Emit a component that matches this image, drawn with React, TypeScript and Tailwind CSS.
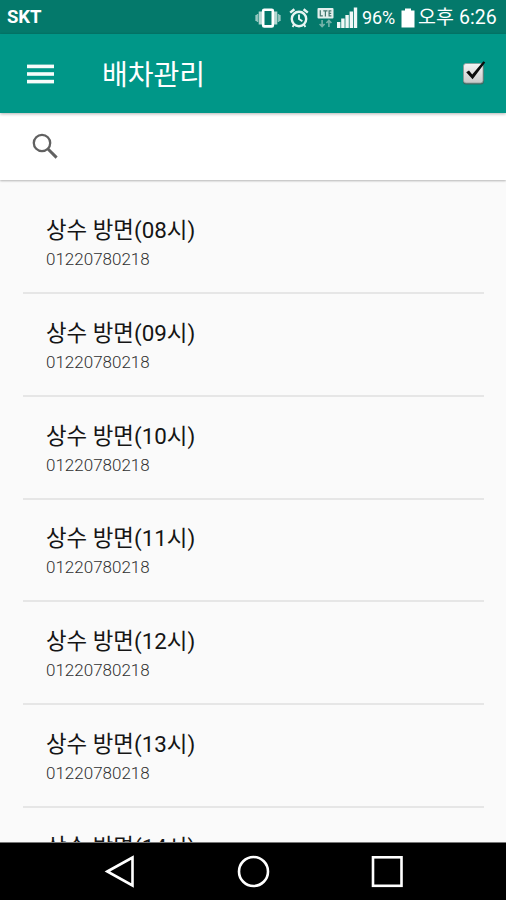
import React from "react";

const routes = [
  { hour: "08", code: "01220780218" },
  { hour: "09", code: "01220780218" },
  { hour: "10", code: "01220780218" },
  { hour: "11", code: "01220780218" },
  { hour: "12", code: "01220780218" },
  { hour: "13", code: "01220780218" },
  { hour: "14", code: "01220780218" },
];

function VibrateIcon() {
  return (
    <svg width="28" height="22" viewBox="0 0 28 22" fill="none" className="shrink-0">
      <path d="M6.4 4.5v13M21.6 4.5v13" stroke="#b4d6d1" strokeWidth="3.4" />
      <path d="M2.4 8v6M25.6 8v6" stroke="#9fcbc5" strokeWidth="2" />
      <path d="M3.5 7v8M24.5 7v8" stroke="#8ac0b8" strokeWidth="1.6" />
      <rect x="9.2" y="2.8" width="9.6" height="16.6" rx="1" stroke="#fff" strokeWidth="2.6" />
    </svg>
  );
}

function AlarmIcon() {
  return (
    <svg width="20" height="22" viewBox="0 0 20 22" fill="none" stroke="#e8f4f2" className="shrink-0">
      <circle cx="10" cy="12" r="7.2" strokeWidth="2.4" />
      <path d="M1.2 5.6 5.4 2.2M18.8 5.6 14.6 2.2" strokeWidth="2.5" />
      <path d="M10 7.4V12l3.4 2.2" strokeWidth="1.9" />
      <path d="M5 17.5 3.6 20M15 17.5l1.4 2.5" strokeWidth="1.8" />
    </svg>
  );
}

function LteIcon() {
  return (
    <svg width="17" height="22" viewBox="0 0 17 22" fill="none" className="shrink-0">
      <rect x="0.5" y="1" width="16" height="10.5" rx="1" fill="#e3efed" />
      <path
        d="M3.3 3.3v5.6h2.5M6.3 3.8h4.2M8.4 3.8v5.6M14.4 3.8h-2.3v5.1h2.3M12.1 6.3h2.1"
        stroke="#44766f"
        strokeWidth="1.2"
      />
      <path
        d="M5.1 13v6.5M2.6 17l2.5 2.6L7.6 17M11.9 20v-6.5M9.4 16l2.5-2.6 2.5 2.6"
        stroke="#76b3aa"
        strokeWidth="1.6"
      />
    </svg>
  );
}

function SignalIcon() {
  return (
    <svg width="21" height="22" viewBox="0 0 21 22" fill="#f1f8f7" className="shrink-0">
      <rect x="0" y="15" width="3.4" height="6" />
      <rect x="4.2" y="11.5" width="3.4" height="9.5" />
      <rect x="8.4" y="8" width="3.4" height="13" />
      <rect x="12.6" y="4.5" width="3.4" height="16.5" />
      <rect x="16.8" y="0.5" width="3.4" height="20.5" />
    </svg>
  );
}

function BatteryIcon() {
  return (
    <svg width="14" height="22" viewBox="0 0 14 22" fill="#fff" className="shrink-0">
      <path d="M4 1.5h6v2h3.5v17H.5v-17H4z" />
    </svg>
  );
}

function StatusBar() {
  return (
    <div className="flex h-[34px] shrink-0 items-center bg-[#04796b] pr-[9px] pl-[7px] text-white">
      <span className="mt-[2px] text-[18.5px] font-bold tracking-[-0.1px]">SKT</span>
      <div className="ml-auto flex items-center pt-px">
        <VibrateIcon />
        <div className="ml-[7px] flex">
          <AlarmIcon />
        </div>
        <div className="ml-[8px] flex">
          <LteIcon />
        </div>
        <div className="ml-[3px] flex">
          <SignalIcon />
        </div>
        <span className="ml-[4px] w-[35px] pt-px text-[18px] leading-[22px] tracking-[-0.1px] whitespace-nowrap">
          96%
        </span>
        <div className="ml-[4px] flex">
          <BatteryIcon />
        </div>
        <span className="ml-[3px] w-[36px] pt-px text-[19.5px] leading-[22px] whitespace-nowrap">오후</span>
        <span className="ml-[5px] w-[38px] pt-px text-[19.5px] leading-[22px] whitespace-nowrap">6:26</span>
      </div>
    </div>
  );
}

function CheckIcon() {
  return (
    <svg width="28" height="28" viewBox="0 0 28 28" fill="none">
      <defs>
        <linearGradient id="box" x1="0" y1="0" x2="0" y2="1">
          <stop offset="0" stopColor="#f4f4f4" />
          <stop offset="1" stopColor="#c9c9c9" />
        </linearGradient>
      </defs>
      <rect x="3" y="4.5" width="20.8" height="20" rx="3" fill="#3f6660" />
      <rect x="3.5" y="3.5" width="19.5" height="19.5" rx="2.5" fill="url(#box)" stroke="#8c9c99" strokeWidth="0.8" />
      <path d="M6.2 12.3 9 10.6l3.2 3.8L23.4 1.2 25.2 2.6 12.6 19.3z" fill="#0b0b0b" />
    </svg>
  );
}

function Header() {
  return (
    <div className="z-10 flex h-[79px] shrink-0 items-center bg-[#009788] pr-[18px] pl-[27px] shadow-[0_1px_3px_rgba(0,0,0,0.3)]">
      <svg width="27" height="20" viewBox="0 0 27 20" fill="#f7fcfb">
        <rect y="0.6" width="27" height="3.6" />
        <rect y="8.2" width="27" height="3.6" />
        <rect y="15.8" width="27" height="3.6" />
      </svg>
      <h1 className="ml-[48px] pt-[4px] text-[28px] leading-[40px] font-normal text-white">배차관리</h1>
      <div className="ml-auto">
        <CheckIcon />
      </div>
    </div>
  );
}

function SearchBar() {
  return (
    <div className="flex h-[67px] shrink-0 items-center bg-white pl-[32px] shadow-[0_1px_2px_rgba(0,0,0,0.28)]">
      <svg width="27" height="27" viewBox="0 0 27 27" fill="none" stroke="#616161">
        <circle cx="10" cy="10" r="8.2" strokeWidth="2.3" />
        <path d="M16 16l8.6 8.6" strokeWidth="3" />
      </svg>
    </div>
  );
}

function NavBar() {
  return (
    <div className="flex h-[58px] shrink-0 items-center border-t border-[#777] bg-black pl-[104px]">
      <svg width="302" height="34" viewBox="0 0 302 34" fill="none" stroke="#fff" strokeWidth="2.6">
        <path d="M3.3 16.5 28.5 2.5v28z" />
        <circle cx="149.5" cy="16.5" r="14.5" />
        <rect x="269" y="2.3" width="28.5" height="28.5" />
      </svg>
    </div>
  );
}

function App() {
  return (
    <div className="flex h-[900px] w-[506px] flex-col overflow-hidden bg-[#fafafa] font-[Roboto,'Noto_Sans_CJK_KR',sans-serif]">
      <StatusBar />
      <Header />
      <SearchBar />
      <div className="min-h-0 flex-1 overflow-hidden pt-[11.6px] pr-[22px] pl-[23px]">
        {routes.map((route) => (
          <div
            key={route.hour}
            className="h-[102.7px] border-b-2 border-[#e6e6e6] pt-[22.8px] pl-[23px]"
          >
            <p className="text-[22.4px] leading-[32px] text-[#151515]">상수 방면({route.hour}시)</p>
            <p className="mt-[2px] text-[17px] leading-[22px] font-light text-[#303030]">{route.code}</p>
          </div>
        ))}
      </div>
      <NavBar />
    </div>
  );
}

export default App;
